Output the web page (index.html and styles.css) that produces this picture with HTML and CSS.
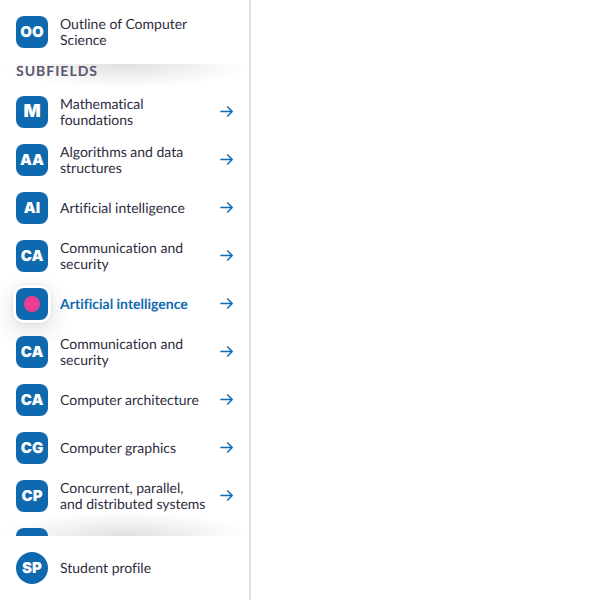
FILE: index.html
```html
<!DOCTYPE html>
<html lang="en">
<head>
<meta charset="utf-8">
<title>Computer Science</title>
<link rel="stylesheet" href="styles.css">
</head>
<body>
<svg class="defs" aria-hidden="true">
  <symbol id="arrow" viewBox="0 0 16 16"><path d="M2 7.5h11M8.7 3 13.2 7.5 8.7 12" fill="none" stroke="currentColor" stroke-width="1.5" stroke-linecap="round" stroke-linejoin="round"/></symbol>
</svg>
<aside class="sidebar">
  <header class="sidebar-end">
    <a class="item" href="#"><span class="badge">OO</span><span class="label">Outline of Computer Science</span></a>
  </header>
  <nav class="scroller" aria-labelledby="subfields">
    <h2 class="heading" id="subfields">Subfields</h2>
    <ul class="list">
      <li><a class="item" href="#"><span class="badge badge-single">M</span><span class="label">Mathematical foundations</span><svg class="arrow"><use href="#arrow"/></svg></a></li>
      <li><a class="item" href="#"><span class="badge">AA</span><span class="label">Algorithms and data structures</span><svg class="arrow"><use href="#arrow"/></svg></a></li>
      <li><a class="item" href="#"><span class="badge">AI</span><span class="label">Artificial intelligence</span><svg class="arrow"><use href="#arrow"/></svg></a></li>
      <li><a class="item" href="#"><span class="badge">CA</span><span class="label">Communication and security</span><svg class="arrow"><use href="#arrow"/></svg></a></li>
      <li><a class="item item-active" href="#" aria-current="page"><span class="badge"><span class="dot"></span></span><span class="label">Artificial intelligence</span><svg class="arrow"><use href="#arrow"/></svg></a></li>
      <li><a class="item" href="#"><span class="badge">CA</span><span class="label">Communication and security</span><svg class="arrow"><use href="#arrow"/></svg></a></li>
      <li><a class="item" href="#"><span class="badge">CA</span><span class="label">Computer architecture</span><svg class="arrow"><use href="#arrow"/></svg></a></li>
      <li><a class="item" href="#"><span class="badge">CG</span><span class="label">Computer graphics</span><svg class="arrow"><use href="#arrow"/></svg></a></li>
      <li><a class="item" href="#"><span class="badge">CP</span><span class="label">Concurrent, parallel, and distributed systems</span><svg class="arrow"><use href="#arrow"/></svg></a></li>
      <li><a class="item" href="#"><span class="badge"></span><span class="label"></span></a></li>
    </ul>
  </nav>
  <footer class="sidebar-end">
    <a class="item" href="#"><span class="badge badge-round">SP</span><span class="label">Student profile</span></a>
  </footer>
</aside>
</body>
</html>
```

FILE: styles.css
```css
* {
  box-sizing: border-box;
}

body {
  margin: 0;
  background: #fff;
  color: #2d2c3d;
  font: 14px/16px Lato, "Open Sans", sans-serif;
  font-variant-ligatures: none;
  text-rendering: geometricPrecision;
}

.defs {
  position: absolute;
  width: 0;
  height: 0;
}

.sidebar {
  display: grid;
  grid-template-rows: auto minmax(0, 1fr) auto;
  width: 251px;
  height: 100vh;
  border-right: 2px solid #e0e0ea;
}

.sidebar-end {
  padding: 8px 0;
}

.scroller {
  overflow: auto;
  scrollbar-width: none;
  background:
    radial-gradient(farthest-side at 50% 0, rgba(0, 0, 0, 0.12), transparent) top / 100% 24px no-repeat,
    radial-gradient(farthest-side at 50% 100%, rgba(0, 0, 0, 0.12), transparent) bottom / 100% 24px no-repeat;
}

.heading {
  margin: 0;
  padding: 0 16px 10px;
  color: #5b5870;
  font-size: 14px;
  font-weight: 700;
  line-height: 14px;
  letter-spacing: 1px;
  text-transform: uppercase;
}

.list {
  margin: 0;
  padding: 0;
  list-style: none;
}

.item {
  display: flex;
  align-items: center;
  gap: 12px;
  height: 48px;
  padding: 0 14px 0 16px;
  color: inherit;
  text-decoration: none;
}

.badge {
  display: flex;
  flex: none;
  align-items: center;
  justify-content: center;
  width: 32px;
  height: 32px;
  border-radius: 8px;
  background: #0f69af;
  color: #fff;
  font: 900 15px/16px Inter, sans-serif;
}

.badge-single {
  font-size: 18px;
}

.badge-round {
  border-radius: 50%;
}

.label {
  flex: 1;
}

.arrow {
  flex: none;
  width: 16px;
  height: 16px;
  color: #0f69af;
}

.item-active {
  color: #0f69af;
  font-weight: 700;
}

.item-active .badge {
  box-shadow: 0 0 0 3px #fff, 0 0 3px 3px rgba(45, 44, 61, 0.12), 0 8px 24px 2px rgba(45, 44, 61, 0.18);
}

.dot {
  width: 16px;
  height: 16px;
  border-radius: 50%;
  background: #eb3c96;
}
```
